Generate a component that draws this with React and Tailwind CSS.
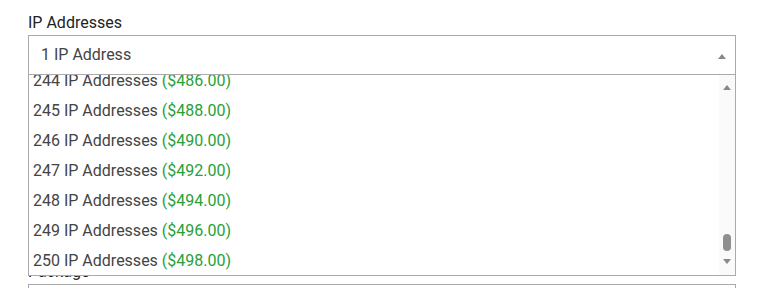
import React from "react";

const rows = [
  [244, "486.00"],
  [245, "488.00"],
  [246, "490.00"],
  [247, "492.00"],
  [248, "494.00"],
  [249, "496.00"],
  [250, "498.00"],
];

function Tri({ up, className }) {
  return (
    <svg width="8" height="5" viewBox="0 0 8 5" className={className}>
      {up ? <polygon points="0,5 8,5 4,0" fill="#888" /> : <polygon points="0,0 8,0 4,5" fill="#888" />}
    </svg>
  );
}

export default function App() {
  return (
    <div
      className="w-[770px] h-[288px] overflow-hidden bg-white px-[28px] pt-[12px]"
      style={{ fontFamily: "Roboto, 'Liberation Sans', sans-serif" }}
    >
      <div className="relative w-[708px]">
        <div className="text-[16px] leading-[22px] text-[#222] mb-[1px]">IP Addresses</div>
        <div className="relative">
          <div className="h-[40px] border border-[#aaa] flex items-center justify-between pl-[12px] pr-[9px] text-[16px] leading-[20px] text-[#444] bg-white">
            <span>1 IP Address</span>
            <Tri up className="mt-[3px]" />
          </div>
          <div className="absolute left-0 right-0 top-[39px] z-10 h-[202px] border border-[#aaa] bg-white flex overflow-hidden">
            <div className="flex-1 overflow-hidden">
              <div className="mt-[-9px]">
                {rows.map(([n, p]) => (
                  <div key={n} className="h-[30px] flex items-center pl-[4px] text-[16px] leading-[20px] text-[#444]">
                    <span>{n} IP Addresses&nbsp;</span>
                    <span className="text-[#28a137]">(${p})</span>
                  </div>
                ))}
              </div>
            </div>
            <div className="w-[16px] bg-[#fafafa] flex flex-col items-center">
              <Tri up className="mt-[10px]" />
              <div className="flex-1" />
              <div className="w-[8px] h-[17px] rounded-full bg-[#8f8f8f] mb-[8px]" />
              <Tri className="mb-[11px]" />
            </div>
          </div>
        </div>
        <div className="mt-[186px] text-[16px] leading-[22px] text-[#222] mb-[1px]">Package</div>
        <div className="h-[40px] border border-[#aaa]" />
      </div>
    </div>
  );
}
